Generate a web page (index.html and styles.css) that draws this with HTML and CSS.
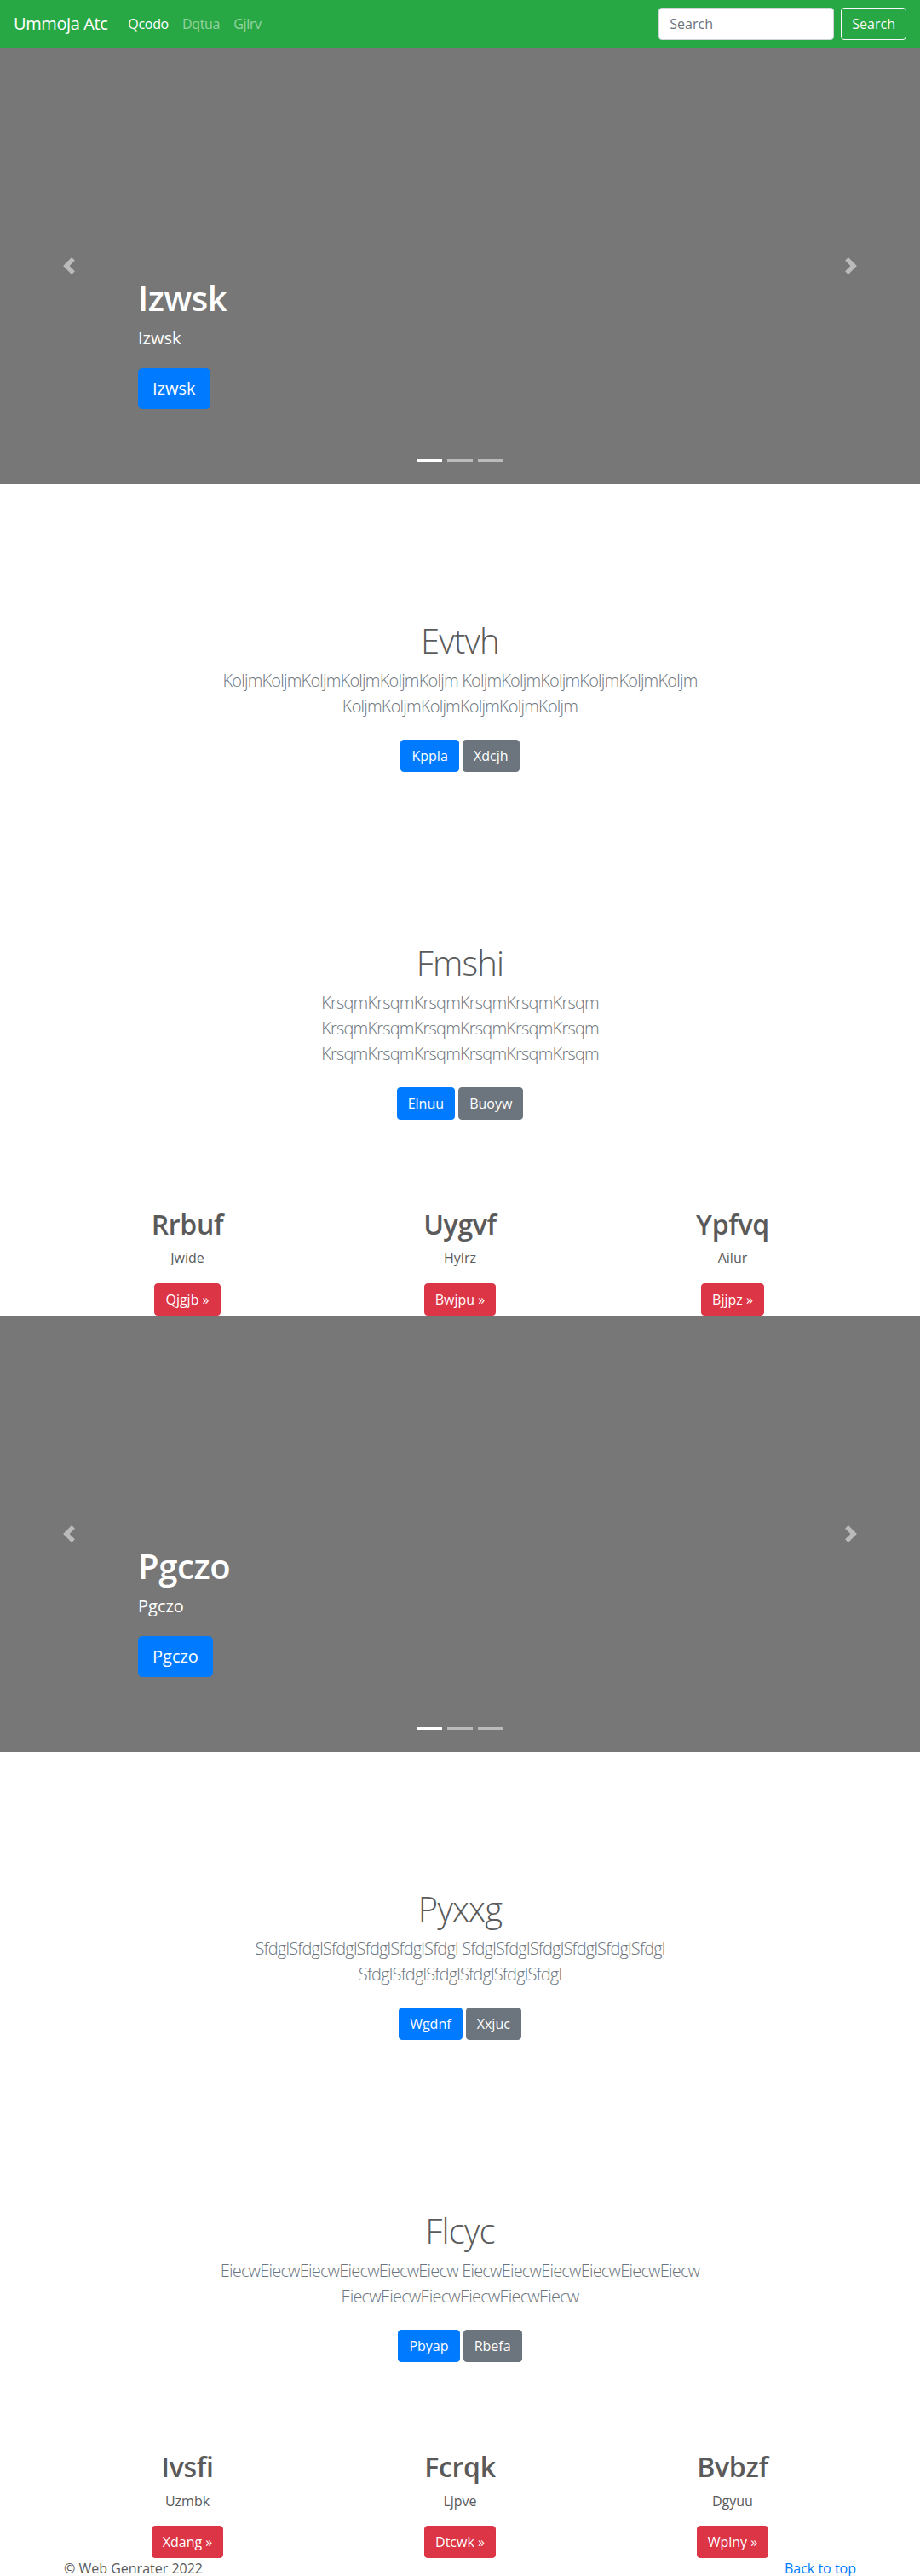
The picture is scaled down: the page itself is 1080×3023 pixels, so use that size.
FILE: index.html
```html
<!DOCTYPE html>
<html lang="en">
<head>
<meta charset="utf-8">
<title>Ummoja Atc</title>
<link rel="stylesheet" href="styles.css">
</head>
<body>
<nav class="navbar">
  <a class="brand" href="#">Ummoja Atc</a>
  <ul class="nav-links">
    <li><a class="nav-link active" href="#">Qcodo</a></li>
    <li><a class="nav-link" href="#">Dqtua</a></li>
    <li><a class="nav-link" href="#">Gjlrv</a></li>
  </ul>
  <form class="search-form">
    <input class="search-input" type="text" placeholder="Search">
    <button class="btn btn-outline-light" type="button">Search</button>
  </form>
</nav>

<div class="carousel">
  <ol class="indicators">
    <li class="active"></li><li></li><li></li>
  </ol>
  <div class="caption">
    <h1 class="caption-title">Izwsk</h1>
    <p class="caption-text">Izwsk</p>
    <p class="caption-action"><a class="btn btn-lg btn-primary" href="#">Izwsk</a></p>
  </div>
  <a class="control control-prev" href="#"><svg width="20" height="20" viewBox="0 0 8 8"><path fill="#fff" d="M5.25 0l-4 4 4 4 1.5-1.5L4.25 4l2.5-2.5L5.25 0z"/></svg></a>
  <a class="control control-next" href="#"><svg width="20" height="20" viewBox="0 0 8 8"><path fill="#fff" d="M2.75 0l-1.5 1.5L3.75 4l-2.5 2.5L2.75 8l4-4-4-4z"/></svg></a>
</div>

<section class="jumbotron">
  <h1 class="jumbo-title">Evtvh</h1>
  <p class="lead">KoljmKoljmKoljmKoljmKoljmKoljm KoljmKoljmKoljmKoljmKoljmKoljm<br>KoljmKoljmKoljmKoljmKoljmKoljm</p>
  <p class="actions"><a class="btn btn-primary" href="#">Kppla</a> <a class="btn btn-secondary" href="#">Xdcjh</a></p>
</section>

<section class="jumbotron">
  <h1 class="jumbo-title">Fmshi</h1>
  <p class="lead">KrsqmKrsqmKrsqmKrsqmKrsqmKrsqm<br>KrsqmKrsqmKrsqmKrsqmKrsqmKrsqm<br>KrsqmKrsqmKrsqmKrsqmKrsqmKrsqm</p>
  <p class="actions"><a class="btn btn-primary" href="#">Elnuu</a> <a class="btn btn-secondary" href="#">Buoyw</a></p>
</section>

<div class="container">
  <div class="row">
    <div class="col">
      <h2 class="col-title">Rrbuf</h2>
      <p class="col-text">Jwide</p>
      <p class="col-action"><a class="btn btn-danger" href="#">Qjgjb &raquo;</a></p>
    </div>
    <div class="col">
      <h2 class="col-title">Uygvf</h2>
      <p class="col-text">Hylrz</p>
      <p class="col-action"><a class="btn btn-danger" href="#">Bwjpu &raquo;</a></p>
    </div>
    <div class="col">
      <h2 class="col-title">Ypfvq</h2>
      <p class="col-text">Ailur</p>
      <p class="col-action"><a class="btn btn-danger" href="#">Bjjpz &raquo;</a></p>
    </div>
  </div>
</div>

<div class="carousel">
  <ol class="indicators">
    <li class="active"></li><li></li><li></li>
  </ol>
  <div class="caption">
    <h1 class="caption-title">Pgczo</h1>
    <p class="caption-text">Pgczo</p>
    <p class="caption-action"><a class="btn btn-lg btn-primary" href="#">Pgczo</a></p>
  </div>
  <a class="control control-prev" href="#"><svg width="20" height="20" viewBox="0 0 8 8"><path fill="#fff" d="M5.25 0l-4 4 4 4 1.5-1.5L4.25 4l2.5-2.5L5.25 0z"/></svg></a>
  <a class="control control-next" href="#"><svg width="20" height="20" viewBox="0 0 8 8"><path fill="#fff" d="M2.75 0l-1.5 1.5L3.75 4l-2.5 2.5L2.75 8l4-4-4-4z"/></svg></a>
</div>

<section class="jumbotron">
  <h1 class="jumbo-title">Pyxxg</h1>
  <p class="lead">SfdglSfdglSfdglSfdglSfdglSfdgl SfdglSfdglSfdglSfdglSfdglSfdgl<br>SfdglSfdglSfdglSfdglSfdglSfdgl</p>
  <p class="actions"><a class="btn btn-primary" href="#">Wgdnf</a> <a class="btn btn-secondary" href="#">Xxjuc</a></p>
</section>

<section class="jumbotron">
  <h1 class="jumbo-title">Flcyc</h1>
  <p class="lead">EiecwEiecwEiecwEiecwEiecwEiecw EiecwEiecwEiecwEiecwEiecwEiecw<br>EiecwEiecwEiecwEiecwEiecwEiecw</p>
  <p class="actions"><a class="btn btn-primary" href="#">Pbyap</a> <a class="btn btn-secondary" href="#">Rbefa</a></p>
</section>

<div class="container">
  <div class="row">
    <div class="col">
      <h2 class="col-title">Ivsfi</h2>
      <p class="col-text">Uzmbk</p>
      <p class="col-action"><a class="btn btn-danger" href="#">Xdang &raquo;</a></p>
    </div>
    <div class="col">
      <h2 class="col-title">Fcrqk</h2>
      <p class="col-text">Ljpve</p>
      <p class="col-action"><a class="btn btn-danger" href="#">Dtcwk &raquo;</a></p>
    </div>
    <div class="col">
      <h2 class="col-title">Bvbzf</h2>
      <p class="col-text">Dgyuu</p>
      <p class="col-action"><a class="btn btn-danger" href="#">Wplny &raquo;</a></p>
    </div>
  </div>
</div>

<footer class="container footer">
  <p class="copyright">&copy; Web Genrater 2022</p>
  <p class="to-top"><a href="#">Back to top</a></p>
</footer>
</body>
</html>
```

FILE: styles.css
```css
* { box-sizing: border-box; }

body {
  margin: 0;
  font-family: "Open Sans", "Noto Sans", sans-serif;
  font-size: 16px;
  line-height: 1.5;
  color: #5a5a5a;
  background: #fff;
}

a { text-decoration: none; }

/* Navbar */
.navbar {
  display: flex;
  align-items: center;
  height: 56px;
  padding: 8px 16px;
  background: #28a745;
}
.brand {
  color: #fff;
  font-size: 20px;
  line-height: 30px;
  padding: 5px 0;
  margin-right: 16px;
  letter-spacing: -0.02em;
}
.nav-links {
  display: flex;
  list-style: none;
  margin: 0;
  padding: 0;
  flex: 1;
}
.nav-link {
  display: block;
  padding: 8px;
  color: rgba(255, 255, 255, 0.5);
  letter-spacing: -0.02em;
}
.nav-link.active { color: #fff; }

.search-form {
  display: flex;
  align-items: center;
}
.search-input {
  width: 206px;
  height: 38px;
  margin-right: 8px;
  padding: 6px 12px;
  font: inherit;
  color: #495057;
  background: #fff;
  border: 1px solid #ced4da;
  border-radius: 4px;
}
.search-input::placeholder { color: #6c757d; }

/* Buttons */
.btn {
  display: inline-block;
  padding: 6px 12px;
  font-family: inherit;
  font-size: 16px;
  line-height: 24px;
  border: 1px solid transparent;
  border-radius: 4px;
  color: #fff;
  vertical-align: middle;
}
.btn-lg {
  padding: 8px 16px;
  font-size: 20px;
  line-height: 30px;
  border-radius: 4.8px;
}
.btn-primary { background: #007bff; border-color: #007bff; }
.btn-secondary { background: #6c757d; border-color: #6c757d; }
.btn-danger { background: #dc3545; border-color: #dc3545; }
.btn-outline-light {
  background: transparent;
  border-color: #f8f9fa;
  color: #f8f9fa;
}

/* Carousel */
.carousel {
  position: relative;
  height: 512px;
  margin-bottom: 64px;
  background: #777;
}
.caption {
  position: absolute;
  left: 15%;
  right: 15%;
  bottom: 48px;
  padding: 20px 0;
  color: #fff;
  text-align: left;
  z-index: 10;
}
.caption-title {
  margin: 0 0 8px;
  font-size: 40px;
  font-weight: 600;
  line-height: 1.2;
  letter-spacing: -0.01em;
}
.caption-text {
  margin: 0 0 18px;
  font-size: 20px;
  line-height: 30px;
}
.caption-action {
  margin: 0 0 20px;
  line-height: 48px;
}
.control {
  position: absolute;
  top: 0;
  bottom: 0;
  width: 15%;
  display: flex;
  align-items: center;
  justify-content: center;
  opacity: 0.5;
}
.control svg { display: block; }
.control-prev { left: 0; }
.control-next { right: 0; }
.indicators {
  position: absolute;
  left: 15%;
  right: 15%;
  bottom: 0;
  display: flex;
  justify-content: center;
  list-style: none;
  margin: 0 0 16px;
  padding: 0;
  z-index: 15;
}
.indicators li {
  width: 30px;
  height: 3px;
  margin: 10px 3px;
  background: #fff;
  opacity: 0.5;
}
.indicators li.active { opacity: 1; }

/* Jumbotron sections */
.jumbotron {
  padding: 96px 15px;
  text-align: center;
}
.jumbo-title {
  margin: 0 0 8px;
  font-size: 40px;
  font-weight: 300;
  line-height: 1.2;
  letter-spacing: -0.02em;
}
.lead {
  margin: 0 0 16px;
  font-size: 20px;
  font-weight: 300;
  line-height: 30px;
  color: #6c757d;
  white-space: nowrap;
  letter-spacing: -0.04em;
}
.actions {
  margin: 0;
}
.actions .btn {
  margin: 8px 0;
}

/* Columns */
.container {
  width: 960px;
  margin: 0 auto;
  padding: 0 15px;
}
.row {
  display: flex;
  margin: 0 -15px;
}
.col {
  flex: 0 0 33.3333%;
  padding: 0 15px;
  text-align: center;
}
.col-title {
  margin: 0 0 8px;
  font-size: 32px;
  font-weight: 600;
  line-height: 1.2;
  letter-spacing: -0.01em;
}
.col-text {
  margin: 0 12px 16px;
}
.col-action {
  margin: 0;
  line-height: 38px;
}

/* Footer */
.footer {
  display: flex;
  justify-content: space-between;
}
.footer p { margin: 0 0 16px; }
.to-top a { color: #007bff; }
```
